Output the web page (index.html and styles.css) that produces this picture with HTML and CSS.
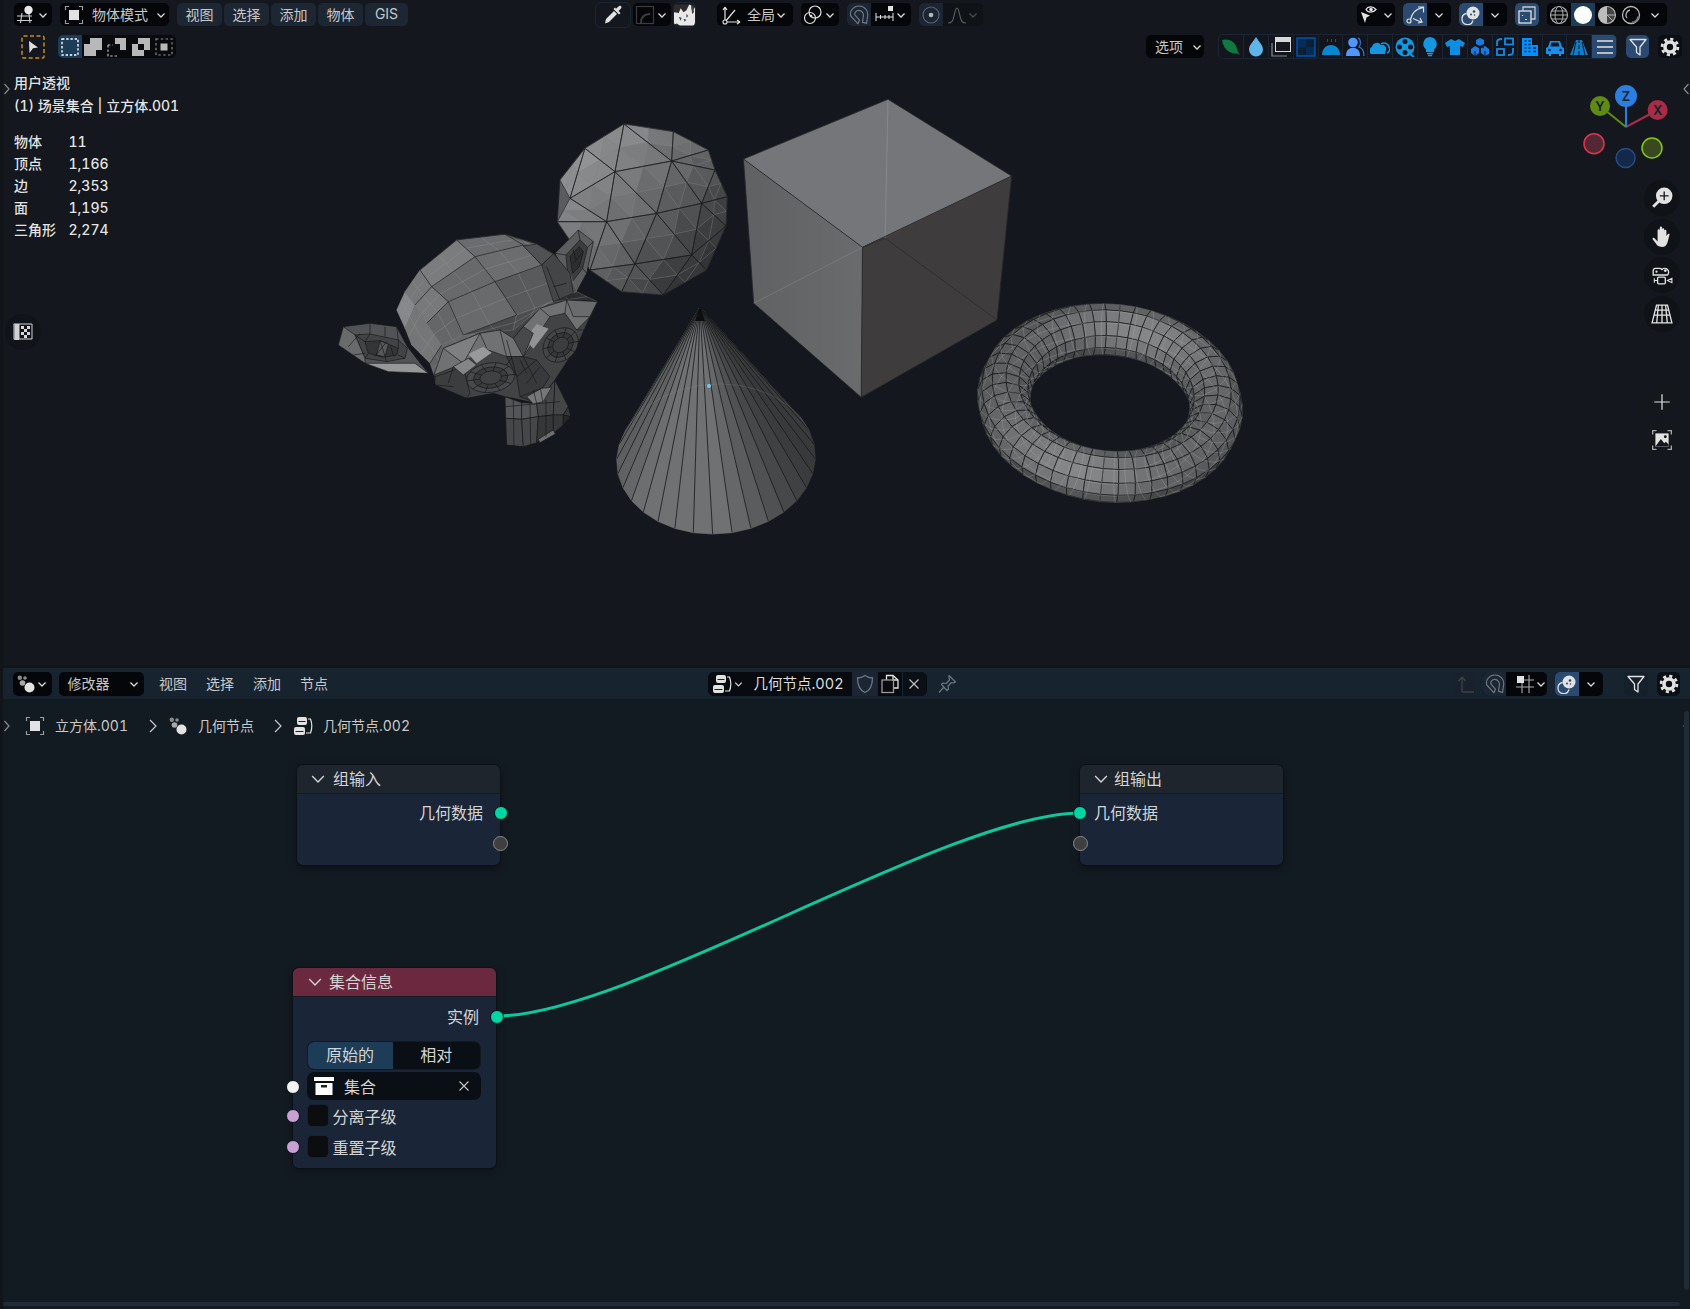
FILE: index.html
```html
<!DOCTYPE html>
<html lang="zh-CN">
<head>
<meta charset="utf-8">
<title>Blender</title>
<link rel="stylesheet" href="styles.css">
</head>
<body>
<svg class="defs" aria-hidden="true">
  <symbol id="chev" viewBox="0 0 12 12"><path d="M2.5 4.5 6 8l3.500-3.500" fill="none" stroke="currentColor" stroke-width="1.300"/></symbol>
  <symbol id="objmode" viewBox="0 0 20 20"><rect x="5" y="5" width="10" height="10" fill="currentColor"/><path d="M5 1.500H1.500V5M15 1.500h3.500V5M5 18.500H1.500V15M15 18.500h3.500V15" fill="none" stroke="#9a9a9a" stroke-width="1.200"/></symbol>
  <symbol id="overlay" viewBox="0 0 20 20"><path d="M5.500 8.500a5.600 5.600 0 1 0 6.500 7" fill="none" stroke="currentColor" stroke-width="1.300"/><circle cx="12" cy="8" r="6.500" fill="currentColor"/><circle cx="13" cy="6.500" r="1.300" fill="#2a4a72"/><circle cx="10" cy="9.500" r="1" fill="#2a4a72"/><circle cx="13.500" cy="10" r=".8" fill="#2a4a72"/></symbol>
  <symbol id="filter" viewBox="0 0 20 20"><path d="M2 2.500h16l-6 7.500v8L8.500 15.500V10z" fill="none" stroke="currentColor" stroke-width="1.300" stroke-linejoin="round"/></symbol>
  <symbol id="gear" viewBox="0 0 20 20"><circle cx="10" cy="10" r="5" fill="none" stroke="currentColor" stroke-width="3.600"/><circle cx="10" cy="10" r="7.900" fill="none" stroke="currentColor" stroke-width="2.800" stroke-dasharray="3.100 3.100"/></symbol>
  <symbol id="magnet" viewBox="0 0 20 20"><path d="M9 18.800 1.800 11C.2 6 4.500 1 10 1c5.500 0 9.200 4.500 8.700 9.500l-1.200 7.800-4-1 .9-6.300c.4-3-1.800-5.700-4.600-5.700-3 0-4.800 3-3.600 5l4.300 4.800z" fill="none" stroke="currentColor" stroke-width="1.200" stroke-linejoin="round"/></symbol>
  <symbol id="nodes" viewBox="0 0 20 20"><circle cx="13.500" cy="13.500" r="5" fill="currentColor"/><circle cx="6.500" cy="9" r="2.800" fill="#a8a8a8"/><circle cx="3.800" cy="3.800" r="2.200" fill="#8a8a8a"/><circle cx="9" cy="4" r="1.800" fill="#8a8a8a"/></symbol>
  <symbol id="nodetree" viewBox="0 0 20 20"><rect x="4" y="1" width="10" height="8" rx="2" fill="currentColor"/><rect x="1" y="11" width="11" height="8" rx="2" fill="currentColor"/><path d="M5.500 5.500h7M2.500 15.500h8" stroke="#222" stroke-width="1.200"/><path d="M15 3h2.500c1.500 4 1.500 10 0 14H13" fill="none" stroke="currentColor" stroke-width="1.200"/></symbol>
  <symbol id="xmark" viewBox="0 0 12 12"><path d="M1.500 1.500l9 9m0-9-9 9" fill="none" stroke="currentColor" stroke-width="1.200"/></symbol>
</svg>

<div class="app">
  <section class="viewport">
    <svg class="scene" viewBox="3 0 1687 665">
      <g id="scene3d"></g>
      <g class="gizmo">
        <circle cx="1594" cy="143.700" r="10" fill="#532835" stroke="#dc3550" stroke-width="1.500"/>
        <circle cx="1652" cy="148" r="10" fill="#39481f" stroke="#82c80f" stroke-width="1.500"/>
        <circle cx="1625.600" cy="158" r="9.500" fill="#14294a" stroke="#234d80" stroke-width="1.500"/>
        <path d="M1626 127l-26-21" stroke="#5f8b13" stroke-width="2"/>
        <path d="M1626 127l31.600-17" stroke="#a82c45" stroke-width="2"/>
        <path d="M1626 127V96" stroke="#2a7fe0" stroke-width="2"/>
        <circle cx="1600" cy="106" r="10" fill="#5f8b13"/><text x="1600" y="110.500" class="axis">Y</text>
        <circle cx="1657.600" cy="110" r="10" fill="#a82c45"/><text x="1657.600" y="114.500" class="axis">X</text>
        <circle cx="1626" cy="96" r="11" fill="#2a7fe0"/><text x="1626" y="100.500" class="axis">Z</text>
      </g>
    </svg>
    <svg class="edge-arrow edge-left" viewBox="0 0 8 14"><path d="M1.500 2 6 7l-4.500 5" fill="none" stroke="#8a8a8a" stroke-width="1.200"/></svg>
    <svg class="edge-arrow edge-right" viewBox="0 0 8 14"><path d="M6.500 2 2 7l4.500 5" fill="none" stroke="#8a8a8a" stroke-width="1.200"/></svg>

    <div class="vp-ui">
      <header class="row row-top">
        <div class="cluster">
          <div class="grp w38">
            <svg class="ic" viewBox="0 0 20 20"><path d="M1 11h15M1 15.500h15M6 8l-1.500 10M13 9l1 9" fill="none" stroke="#cfcfcf" stroke-width="1.100"/><circle cx="12.500" cy="5" r="4.200" fill="#e8e8e8"/></svg>
            <svg class="chev"><use href="#chev"/></svg>
          </div>
          <div class="grp w109 mode">
            <svg class="ic lit"><use href="#objmode"/></svg>
            <span class="lbl">物体模式</span>
            <svg class="chev push"><use href="#chev"/></svg>
          </div>
          <nav class="menu">
            <button class="mbtn">视图</button>
            <button class="mbtn">选择</button>
            <button class="mbtn">添加</button>
            <button class="mbtn">物体</button>
            <button class="mbtn">GIS</button>
          </nav>
        </div>

        <div class="cluster center-top">
          <div class="tight">
            <div class="ghost w36">
              <svg class="ic lit" viewBox="0 0 20 20"><path d="M2 18.500 3 14l8-8 3 3-8 8z" fill="currentColor"/><path d="M10.500 4l5.500 5.500 1.500-1.500-2-2L18 3.500C19.500 1.500 17 -.5 15.500 1.500L13 3.800 12 2.500z" fill="currentColor"/></svg>
            </div>
            <div class="grp w38">
              <svg class="ic" viewBox="0 0 20 20"><rect x="1.500" y="1.500" width="17" height="17" fill="none" stroke="#3c3c3c" stroke-width="1.200"/><path d="M6 18c0-6 3-9 9-9" fill="none" stroke="#3c3c3c" stroke-width="2"/></svg>
              <svg class="chev"><use href="#chev"/></svg>
            </div>
            <div class="ghost w23 thumb">
              <svg viewBox="0 0 22 22"><rect width="22" height="22" fill="#2c2c2c"/><path d="M0 8l5 1L7 4l3 4 3-2 3-6 2 1 1 6 3-4v19H6l-3-2-3 1z" fill="#e8e8e8"/><path d="M5 13l3 1-1 3zm8-3l2 2-2 2zm-3 5l3 1-2 2zM18 2l1 8 2-2-1-6z" fill="#444"/></svg>
            </div>
          </div>
          <div class="grp w76">
            <svg class="ic lit" viewBox="0 0 20 20"><path d="M4 17V2M4 2 2 5m2-3 2 3M4 17h15m0 0-3-2m3 2-3 2M4 17 14 5" fill="none" stroke="currentColor" stroke-width="1.200"/><circle cx="4" cy="17" r="2" fill="#050608" stroke="currentColor" stroke-width="1.100"/></svg>
            <span class="lbl sm">全局</span>
            <svg class="chev"><use href="#chev"/></svg>
          </div>
          <div class="grp w38">
            <svg class="ic lit" viewBox="0 0 20 20"><circle cx="12" cy="7" r="6" fill="none" stroke="currentColor" stroke-width="1.200"/><circle cx="7" cy="13" r="5.500" fill="none" stroke="currentColor" stroke-width="1.200"/><circle cx="8" cy="11" r="1.300" fill="currentColor"/></svg>
            <svg class="chev"><use href="#chev"/></svg>
          </div>
          <div class="grp w64 split">
            <div class="cell navy w24"><svg class="ic dim"><use href="#magnet"/></svg></div>
            <svg class="ic lit" viewBox="0 0 20 20"><rect x="13" y="1" width="5" height="5" fill="currentColor"/><path d="M1 8v8M18 8v8M1 12h17M5.500 10v4M10 10v4M14 10v4" fill="none" stroke="currentColor" stroke-width="1"/></svg>
            <svg class="chev"><use href="#chev"/></svg>
          </div>
          <div class="grp w64 split faded">
            <div class="cell navy w24"><svg class="ic" viewBox="0 0 20 20"><circle cx="10" cy="10" r="8" fill="none" stroke="#5a6270" stroke-width="1.200"/><circle cx="10" cy="10" r="2.300" fill="#b8b8b8"/></svg></div>
            <svg class="ic" viewBox="0 0 20 20"><path d="M1 18c4 0 5-2 6-7s2-8 3-8 2 3 3 8 2 7 6 7" fill="none" stroke="#5c5c5c" stroke-width="1.200"/></svg>
            <svg class="chev dimchev"><use href="#chev"/></svg>
          </div>
        </div>

        <div class="cluster right-top">
          <div class="grp w38 eye">
            <svg class="ic lit" viewBox="0 0 20 20"><path d="M7 4.500C9 1 14 1 17 4.500 14 8 9 8 7 4.500z" fill="none" stroke="currentColor" stroke-width="1.200"/><circle cx="12" cy="4.500" r="1.800" fill="currentColor"/><path d="M2 7l9 3.500-3.500 2L6 18z" fill="currentColor"/></svg>
            <svg class="chev"><use href="#chev"/></svg>
          </div>
          <div class="grp w48 split">
            <div class="cell blue w24"><svg class="ic lit" viewBox="0 0 20 20"><path d="M5.500 14.500C7 8 10 4.500 18 2.500M13 2h5.500v5.500M8 13.500l8 3.500M15 13l2 4-4 1" fill="none" stroke="currentColor" stroke-width="1.200"/><circle cx="4" cy="16" r="2" fill="none" stroke="currentColor" stroke-width="1.200"/></svg></div>
            <svg class="chev wide"><use href="#chev"/></svg>
          </div>
          <div class="grp w48 split">
            <div class="cell blue w24"><svg class="ic lit"><use href="#overlay"/></svg></div>
            <svg class="chev wide"><use href="#chev"/></svg>
          </div>
          <div class="cell blue w24 rounded">
            <svg class="ic lit" viewBox="0 0 20 20"><rect x="2" y="6" width="12" height="12" fill="none" stroke="currentColor" stroke-width="1.300"/><path d="M6 6V2h12v12h-4" fill="none" stroke="#c8c8c8" stroke-width="1.300"/><path d="M5.500 10v1M8 14.500h2" stroke="currentColor" stroke-width="1.200"/></svg>
          </div>
          <div class="grp w120 shading">
            <div class="cell w24"><svg class="ic" viewBox="0 0 20 20"><circle cx="10" cy="10" r="8.500" fill="none" stroke="#aaa" stroke-width="1.200"/><ellipse cx="10" cy="10" rx="4" ry="8.500" fill="none" stroke="#aaa"/><path d="M1.500 10h17M3 6h14M3 14h14" stroke="#aaa"/></svg></div>
            <div class="cell navy2 w24"><svg class="ic" viewBox="0 0 20 20"><circle cx="10" cy="10" r="9" fill="#fff"/></svg></div>
            <div class="cell w24"><svg class="ic" viewBox="0 0 20 20"><circle cx="10" cy="10" r="8.500" fill="#444" stroke="#b4b4b4" stroke-width="1.200"/><path d="M10 1.500A8.500 8.500 0 0 0 10 18.500V10z" fill="#bdbdbd"/><path d="M10 10h8M10 10l6 6" stroke="#b4b4b4"/></svg></div>
            <div class="cell w24"><svg class="ic" viewBox="0 0 20 20"><circle cx="10" cy="10" r="8.500" fill="none" stroke="#b4b4b4" stroke-width="1.300"/><path d="M6 13a5 5 0 0 1 3-8" fill="none" stroke="#b4b4b4" stroke-width="1.300"/><path d="M11 17.500c3 0 6-3 6.500-6" fill="none" stroke="#777" stroke-width="2"/></svg></div>
            <svg class="chev wide"><use href="#chev"/></svg>
          </div>
        </div>
      </header>

      <div class="row row-tool">
        <div class="cluster">
          <div class="tool">
            <svg viewBox="0 0 24 24"><rect x="1" y="1" width="22" height="22" rx="1.500" fill="none" stroke="#c98a1e" stroke-width="1.500" stroke-dasharray="4 2.500"/><path d="M8 6l9 6.500-5 .7-3.500 4.800z" fill="#e0e0e0"/></svg>
          </div>
          <div class="modes">
            <div class="cell sel w24"><svg class="ic" viewBox="0 0 20 20"><rect x="2" y="2" width="16" height="16" fill="none" stroke="#fff" stroke-width="1.400" stroke-dasharray="2.400 1.800"/></svg></div>
            <div class="cell w24"><svg class="ic" viewBox="0 0 20 20"><path d="M7 1h12v12h-6v6H1V7h6z" fill="#b8b8b8"/></svg></div>
            <div class="cell w24"><svg class="ic" viewBox="0 0 20 20"><path d="M8 1h11v12h-6V7H8z" fill="#b8b8b8"/><path d="M1 8v11h11M1 8h5" fill="none" stroke="#b8b8b8" stroke-width="1.200" stroke-dasharray="2.400 2"/></svg></div>
            <div class="cell w24"><svg class="ic" viewBox="0 0 20 20"><path d="M7 1h12v12h-6V7H7z" fill="#b8b8b8"/><path d="M1 7h6v6h6v6H1z" fill="#b8b8b8"/></svg></div>
            <div class="cell w24"><svg class="ic" viewBox="0 0 20 20"><rect x="6.500" y="6.500" width="7" height="7" fill="#b8b8b8"/><rect x="2" y="2" width="16" height="16" fill="none" stroke="#8c8c8c" stroke-width="1.200" stroke-dasharray="2.400 2.400"/></svg></div>
          </div>
        </div>
        <div class="cluster right-tool">
          <div class="grp w58 options"><span class="lbl sm">选项</span><svg class="chev push"><use href="#chev"/></svg></div>
          <div class="collections">
            <div class="ccell"><svg viewBox="0 0 20 20"><path d="M1 3c7-2 14 1 16 12l2 3-3-1.500C8 17 2 11 1 3z" fill="#0e7a42"/></svg></div>
            <div class="ccell"><svg viewBox="0 0 20 20"><path d="M10 0c3 5 7 8 7 12.500a7 7 0 0 1-14 0C3 8 7 5 10 0z" fill="#5fb4ea"/></svg></div>
            <div class="ccell"><svg viewBox="0 0 20 20"><rect x="4" y="0" width="16" height="15" fill="#d8d8d8"/><rect x="5" y="5" width="14" height="9" fill="#14181e"/><path d="M1 6v13h15" fill="none" stroke="#8a8a8a" stroke-width="1.200"/></svg></div>
            <div class="ccell"><svg viewBox="0 0 20 20"><rect x="1" y="1" width="18" height="18" fill="#052c58" stroke="#0050a8" stroke-width="1.500"/><rect x="10" y="2" width="8" height="8" fill="#0d1f33"/><rect x="2" y="10" width="8" height="8" fill="#0d1f33"/></svg></div>
            <div class="ccell"><svg viewBox="0 0 20 20"><path d="M1 18c0-6 4-10 9-10s9 4 9 10z" fill="#0a86d0"/><path d="M6 2c2 1-1 2 1 3M10 2c2 1-1 2 1 3M14 2c2 1-1 2 1 3" fill="none" stroke="#0a6aa8"/></svg></div>
            <div class="ccell"><svg viewBox="0 0 20 20"><circle cx="8" cy="5.500" r="4.800" fill="#4f96ff"/><path d="M1 19c0-5 2-7 5-8h4c3 1 5 3 5 8z" fill="#4f96ff"/><path d="M13 1c3 1 3 7 1 9 3 1 5 4 5 9" fill="none" stroke="#3978cc" stroke-width="1.200"/></svg></div>
            <div class="ccell"><svg viewBox="0 0 20 20"><path d="M1 17a4 4 0 0 1 1-7 5 5 0 0 1 9-2 4 4 0 0 1 5 5l-1 4z" fill="#1596e0"/><path d="M11 7a5 5 0 0 1 8 3 4 4 0 0 1-2 6" fill="none" stroke="#1596e0" stroke-width="1.500"/></svg></div>
            <div class="ccell"><svg viewBox="0 0 20 20"><circle cx="10" cy="10" r="9.500" fill="#1596e0"/><circle cx="10" cy="4.500" r="2.500" fill="#14181e"/><circle cx="10" cy="15.500" r="2.500" fill="#14181e"/><circle cx="4.500" cy="10" r="2.500" fill="#14181e"/><circle cx="15.500" cy="10" r="2.500" fill="#14181e"/><path d="M15 17l4 3" stroke="#1596e0" stroke-width="2"/></svg></div>
            <div class="ccell"><svg viewBox="0 0 20 20"><path d="M10 0a7 7 0 0 1 4 12.500V15H6v-2.500A7 7 0 0 1 10 0z" fill="#1596e0"/><path d="M7 16.500h6M8 18.500h4" stroke="#1596e0" stroke-width="1.300"/></svg></div>
            <div class="ccell"><svg viewBox="0 0 20 20"><path d="M6 2l4 2 4-2 6 4-2 4-3-1v9H5V9l-3 1-2-4z" fill="#0d8ee0"/></svg></div>
            <div class="ccell"><svg viewBox="0 0 20 20"><path d="M10 1l4 2v4l-4 2-4-2V3zM5 9l4 2v5l-4 3-4-3v-4zM15 9l4 3v5l-4 2-4-3v-5z" fill="#1a7ae0"/><path d="M10 9l4 2M5 14v5M15 14v5" stroke="#14181e"/></svg></div>
            <div class="ccell"><svg viewBox="0 0 20 20"><rect x="10" y="1.500" width="8" height="6" fill="none" stroke="#1a88e0" stroke-width="1.800"/><rect x="2" y="12" width="7" height="6" fill="none" stroke="#1a88e0" stroke-width="1.800"/><path d="M2 9V5c0-2 1-3 5-3M18 11v4c0 2-1 3-5 3" fill="none" stroke="#1a88e0" stroke-width="1.800"/></svg></div>
            <div class="ccell"><svg viewBox="0 0 20 20"><path d="M2 19V1h10v7h6v11z" fill="#0090ff"/><path d="M4.500 4h2M8.500 4h2M4.500 7.500h2M8.500 7.500h2M4.500 11h2M8.500 11h2M13 11h3M13 14.500h3M4.500 14.500h2M8.500 14.500h2" stroke="#14181e" stroke-width="1.500"/></svg></div>
            <div class="ccell"><svg viewBox="0 0 20 20"><path d="M1 17v-6l2-1 2-6h10l2 6 2 1v6h-3v2h-2v-2H6v2H4v-2z" fill="#1590f0"/><path d="M5.500 9.500l1-4h7l1 4z" fill="#14181e"/><circle cx="4.500" cy="13" r="1.300" fill="#14181e"/><circle cx="15.500" cy="13" r="1.300" fill="#14181e"/></svg></div>
            <div class="ccell"><svg viewBox="0 0 20 20"><path d="M1 18 7 3h6l6 15z" fill="#0f7dc8"/><path d="M10 3v3M10 8v4M10 14v4M7 5 4 18M13 5l3 13" stroke="#14181e" stroke-width="1"/></svg></div>
            <div class="ccell active"><svg viewBox="0 0 20 20"><path d="M2 4h16M2 10h16M2 16h16" stroke="#b4bcc6" stroke-width="1.800"/></svg></div>
          </div>
          <div class="cell blue w23 rounded"><svg class="ic lit"><use href="#filter"/></svg></div>
          <div class="cell blackish w24 rounded"><svg class="ic lit"><use href="#gear"/></svg></div>
        </div>
      </div>

      <div class="hud">
        <div class="hud-line">用户透视</div>
        <div class="hud-line">(1) 场景集合 | 立方体.001</div>
        <dl class="stats">
          <dt>物体</dt><dd>11</dd>
          <dt>顶点</dt><dd>1,166</dd>
          <dt>边</dt><dd>2,353</dd>
          <dt>面</dt><dd>1,195</dd>
          <dt>三角形</dt><dd>2,274</dd>
        </dl>
        <div class="roundbtn hud-btn">
          <svg class="ic lit" viewBox="0 0 20 20"><path d="M1.500 2H6v16H1.500z" fill="#d0d0d0"/><path d="M1 2h18v15H1zM6 2v15" fill="none" stroke="#d0d0d0"/><path d="M8 4h3v3H8zm6 0h3v3h-3zm-3 3h3v3h-3zM8 10h3v3H8zm6 0h3v3h-3zm-3 3h3v3h-3z" fill="#d8d8d8"/></svg>
        </div>
      </div>
    </div>

    <aside class="navcol">
      <div class="roundbtn"><svg class="ic lit" viewBox="0 0 20 20"><circle cx="12" cy="8" r="7.500" fill="currentColor"/><path d="M12 4v8M8 8h8" stroke="#14181e" stroke-width="1.200"/><path d="M7 13l-5 5" stroke="currentColor" stroke-width="2.600"/></svg></div>
      <div class="roundbtn"><svg class="ic lit" viewBox="0 0 20 20"><path d="M3 11l3 3V4a1 1 0 0 1 2 0V1.500a1 1 0 0 1 2 0V3a1 1 0 0 1 2 0v1.500a1 1 0 0 1 2 0V9c1-1.500 1.500-2 2.500-2 .5 0 .5.500.3 1L15 15c-1 3-2.500 4-5 4-3 0-4.500-1-5.500-3l-3-4c-.5-1 .5-2 1.500-1z" fill="currentColor"/></svg></div>
      <div class="roundbtn"><svg class="ic lit" viewBox="0 0 20 20"><path d="M2 10V6a2 2 0 0 1 2-2h3a3 3 0 0 1 3 1 3.500 3.500 0 1 1 5 5z" fill="none" stroke="currentColor" stroke-width="1.200"/><circle cx="5" cy="7" r="1" fill="currentColor"/><circle cx="13" cy="6" r="1.300" fill="currentColor"/><rect x="6" y="12" width="7" height="6" rx="1" fill="none" stroke="currentColor" stroke-width="1.200"/><path d="M3 13v4M3 15h3M15 15l4-2v4z" fill="none" stroke="currentColor"/></svg></div>
      <div class="roundbtn"><svg class="ic lit" viewBox="0 0 20 20"><path d="M5 2h10l4 16H1zM10 2v16M2.700 11h14.600M4 6.500h12M6.700 2l-1.500 16M13.300 2l1.500 16" fill="none" stroke="currentColor" stroke-width="1.200"/></svg></div>
      <div class="roundbtn gapped faint"><svg class="ic lit" viewBox="0 0 20 20"><path d="M10 3v14M3 10h14" stroke="currentColor" stroke-width="1.100"/></svg></div>
      <div class="roundbtn faint"><svg class="ic lit" viewBox="0 0 20 20"><path d="M5 1.500H1.500V5M15 1.500h3.500V5M5 18.500H1.500V15M15 18.500h3.500V15" fill="none" stroke="#a8a8a8" stroke-width="1.200"/><rect x="4" y="4" width="12" height="12" fill="currentColor"/><path d="M4 16l5-7 3 4 1.500-1.500L16 14v2z" fill="#14181e"/><circle cx="13" cy="7" r="1.300" fill="#14181e"/></svg></div>
    </aside>
  </section>

  <section class="editor">
    <header class="ed-head">
      <div class="grp h24 w39">
        <svg class="ic lit"><use href="#nodes"/></svg>
        <svg class="chev"><use href="#chev"/></svg>
      </div>
      <div class="grp h24 w85 ed-mode"><span class="lbl sm">修改器</span><svg class="chev push"><use href="#chev"/></svg></div>
      <nav class="ed-menu">
        <span class="emi">视图</span><span class="emi">选择</span><span class="emi">添加</span><span class="emi">节点</span>
      </nav>
      <div class="tree">
        <div class="cell black w38"><svg class="ic lit"><use href="#nodetree"/></svg><svg class="chev"><use href="#chev"/></svg></div>
        <div class="cell black w106"><span class="lbl tree-name">几何节点.002</span></div>
        <div class="cell navy w26"><svg class="ic dim" viewBox="0 0 20 20"><path d="M10 1.500c2 1.500 5 2.500 7.500 2.500 0 7-2 12-7.500 14.500C4.500 16 2.500 11 2.500 4 5 4 8 3 10 1.500z" fill="none" stroke="currentColor" stroke-width="1.300"/></svg></div>
        <div class="cell black w24"><svg class="ic lit" viewBox="0 0 20 20"><path d="M6.500 6V1.500H13l5 4.500v8h-4.500" fill="none" stroke="currentColor" stroke-width="1.300"/><path d="M13 1.500V6h5" fill="none" stroke="currentColor" stroke-width="1.300"/><rect x="2" y="6" width="11.500" height="12.500" fill="none" stroke="#9a9a9a" stroke-width="1.300"/></svg></div>
        <div class="cell sep w24"><svg class="x"><use href="#xmark"/></svg></div>
      </div>
      <svg class="ic dim pin" viewBox="0 0 20 20"><path d="M12 1.500l6.500 6.500-2 1-2-.5-3.500 3.500.5 3-1.500 1.500L4.500 10.500 6 9l3 .5L12.500 6l-.5-2zM7 13l-5 5.500" fill="none" stroke="currentColor" stroke-width="1.200" stroke-linejoin="round"/></svg>
      <div class="ed-right">
        <div class="cell faintbtn w23"><svg class="ic" viewBox="0 0 20 20"><path d="M7 18V3M7 3 3.500 7M7 3l3.500 4M7 18h12" fill="none" stroke="#3c4248" stroke-width="1.300"/></svg></div>
        <div class="grp h24 w62 split magnetgrp">
          <div class="cell navy w23"><svg class="ic dim"><use href="#magnet"/></svg></div>
          <svg class="ic lit" viewBox="0 0 20 20"><rect x="2" y="2" width="7" height="7" fill="currentColor"/><path d="M1 13h18M9 6h10M14 1v18M7 9v10" fill="none" stroke="#aaa" stroke-width="1.100"/></svg>
          <svg class="chev"><use href="#chev"/></svg>
        </div>
        <div class="grp h24 w48 split ovgrp">
          <div class="cell blue w24"><svg class="ic lit"><use href="#overlay"/></svg></div>
          <svg class="chev wide"><use href="#chev"/></svg>
        </div>
        <div class="cell faintbtn w24 filtbtn"><svg class="ic lit"><use href="#filter"/></svg></div>
        <div class="cell blackish w23"><svg class="ic lit"><use href="#gear"/></svg></div>
      </div>
    </header>

    <div class="crumbs">
      <svg class="crumb-tab" viewBox="0 0 8 14"><path d="M1.500 2 6 7l-4.500 5" fill="none" stroke="#8a8a8a" stroke-width="1.200"/></svg>
      <svg class="ic lit"><use href="#objmode"/></svg><span class="crumb c1">立方体.001</span>
      <svg class="crumb-sep" viewBox="0 0 8 14"><path d="M1 1l6 6-6 6" fill="none" stroke="#c8c8c8" stroke-width="1.200"/></svg>
      <svg class="ic lit"><use href="#nodes"/></svg><span class="crumb c2">几何节点</span>
      <svg class="crumb-sep" viewBox="0 0 8 14"><path d="M1 1l6 6-6 6" fill="none" stroke="#c8c8c8" stroke-width="1.200"/></svg>
      <svg class="ic lit"><use href="#nodetree"/></svg><span class="crumb c3">几何节点.002</span>
    </div>

    <svg class="edge-arrow edge-right ed-tab" viewBox="0 0 8 14"><path d="M6.500 2 2 7l4.500 5" fill="none" stroke="#8a8a8a" stroke-width="1.200"/></svg>

    <svg class="wires" viewBox="3 668 1687 641">
      <path d="M497 1016C627 1016 950 813 1080 813" fill="none" stroke="#10c79b" stroke-width="3"/>
    </svg>

    <article class="node node-input">
      <div class="node-head"><svg class="ncaret" viewBox="0 0 12 12"><path d="M1 3.500 6 8.500l5-5" fill="none" stroke="currentColor" stroke-width="1.200"/></svg><span class="node-title">组输入</span></div>
      <div class="node-body">
        <div class="nrow right">几何数据<i class="sock out geo"></i></div>
        <div class="nrow right"><i class="sock out virt"></i></div>
      </div>
    </article>

    <article class="node node-output">
      <div class="node-head"><svg class="ncaret" viewBox="0 0 12 12"><path d="M1 3.500 6 8.500l5-5" fill="none" stroke="currentColor" stroke-width="1.200"/></svg><span class="node-title">组输出</span></div>
      <div class="node-body">
        <div class="nrow left">几何数据<i class="sock in geo"></i></div>
        <div class="nrow left"><i class="sock in virt"></i></div>
      </div>
    </article>

    <article class="node node-info">
      <div class="node-head red"><svg class="ncaret" viewBox="0 0 12 12"><path d="M1 3.500 6 8.500l5-5" fill="none" stroke="currentColor" stroke-width="1.200"/></svg><span class="node-title">集合信息</span></div>
      <div class="node-body">
        <div class="nrow right">实例<i class="sock out geo"></i></div>
        <div class="toggle"><span class="tog on">原始的</span><span class="tog">相对</span></div>
        <div class="field">
          <i class="sock in white"></i>
          <svg class="box-ic" viewBox="0 0 20 18"><path d="M0 0h20v4H0z" fill="#fff"/><path d="M1.500 6h17v12h-17z" fill="#fff"/><path d="M7 8h6v2.500H7z" fill="#222"/></svg>
          <span class="field-txt">集合</span>
          <svg class="x"><use href="#xmark"/></svg>
        </div>
        <div class="crow"><i class="sock in pink"></i><span class="check"></span><span>分离子级</span></div>
        <div class="crow"><i class="sock in pink"></i><span class="check"></span><span>重置子级</span></div>
      </div>
    </article>

    <div class="scroll-v"></div>
    <div class="scroll-h"></div>
  </section>
</div>
<script src="scene.js"></script>
</body>
</html>
```

FILE: styles.css
```css
* { box-sizing: border-box; }
html, body { margin: 0; padding: 0; background: #111418; }
body { font-family: "Inter", "Noto Sans CJK SC", sans-serif; font-size: 14px; color: #c9c9c9; overflow: hidden; font-variant-numeric: tabular-nums; }
.defs { position: absolute; width: 0; height: 0; }

.app { width: 1690px; height: 1309px; display: flex; flex-direction: column; padding-left: 3px; background: #111418; }

/* ---------- viewport ---------- */
.viewport { position: relative; height: 665px; background: #14181e; flex: none; }
.scene { position: absolute; left: 0; top: 0; width: 1687px; height: 665px; }
.axis { font: 600 13px "Inter", sans-serif; fill: #12202e; text-anchor: middle; }
.vp-ui { position: relative; padding-top: 3px; }

.edge-arrow { position: absolute; width: 8px; height: 14px; top: 82px; }
.edge-left { left: 0; }
.edge-right { right: 0; }

.row { display: flex; align-items: center; height: 23px; }
.row-top { padding: 0 23px 0 11px; }
.row-tool { margin-top: 9px; padding: 0 8px 0 18px; }
.cluster { display: flex; align-items: center; }
.center-top { margin-left: 187px; }
.right-top { margin-left: auto; gap: 8px; }
.right-tool { margin-left: auto; }

.grp { display: flex; align-items: center; height: 23px; background: #040609; border-radius: 5px; overflow: hidden; flex: none; }
.h24 { height: 24px; }
.w38 { width: 38px; padding-left: 2px; }
.w38 .chev { margin-left: 1px; }
.eye .chev { margin-left: 3px; }
.w39 { width: 39px; padding-left: 3px; }
.w48 { width: 48px; }
.w58 { width: 58px; }
.w62 { width: 62px; }
.w64 { width: 64px; }
.w76 { width: 76px; padding-left: 4px; }
.w85 { width: 85px; }
.w109 { width: 109px; padding: 0 2px 0 4px; }
.w120 { width: 120px; }

.cell { display: flex; align-items: center; justify-content: center; height: 100%; flex: none; }
.w23 { width: 23px; }
.w24 { width: 24px; }
.w26 { width: 26px; }
.w36 { width: 36px; }
.w106 { width: 106px; }
.rounded { height: 23px; border-radius: 5px; }
.navy { background: #1c2533; }
.navy2 { background: #1d3c58; }
.blue { background: #2a4a72; }
.black { background: #070a0e; }
.blackish { background: #0b0e12; }
.sep { background: #0b1016; border-left: 1px solid #1a2430; color: #c8c8c8; }
.sel { background: #1d3c58; }

.ic { width: 20px; height: 20px; flex: none; display: block; }
.lit { color: #e2e2e2; }
.dim { color: #6f7780; }
.chev { width: 12px; height: 12px; flex: none; color: #d8d8d8; display: block; }
.chev.wide { margin-left: 6px; }
.chev.push { margin-left: auto; }
.dimchev { color: #4c4c4c; }
.lbl { margin-left: 8px; padding-bottom: 2px; color: #c8c8c8; white-space: nowrap; }
.lbl.sm { margin-left: 6px; }

.menu { display: flex; gap: 2px; margin-left: 8px; }
.cluster > .grp + .grp { margin-left: 8px; }
.right-top > .grp + .grp { margin-left: 0; }
.mbtn { width: 45px; height: 23px; padding: 0 0 2px; border: 0; border-radius: 5px; background: #1c2733; color: #c8c8c8; font: inherit; }
.mbtn:last-child { width: 43px; }

.tight { display: flex; align-items: center; gap: 2px; }
.ghost { height: 26px; display: flex; align-items: center; justify-content: center; border: 1px solid #1b2533; border-radius: 6px; flex: none; overflow: hidden; }
.thumb svg { width: 100%; height: 100%; display: block; }
.center-top .tight + .grp { margin-left: 21px; }
.split .cell { height: 100%; margin-right: 0; }
.split > .ic { margin-left: 4px; }
.faded { background: #0f1216; }

.tool { width: 24px; height: 24px; flex: none; }
.tool svg { display: block; width: 24px; height: 24px; }
.modes { display: flex; width: 118px; height: 23px; margin-left: 13px; background: #080a0d; border-radius: 5px; overflow: hidden; }
.modes .cell { width: 23.600px; }

.options { padding: 0 1px 0 1px; }
.options .lbl.sm { margin-left: 8px; }
.collections { display: flex; width: 399px; height: 25px; margin-left: 14px; margin-right: 9px; background: #12161c; border: 1px solid #1b2433; border-radius: 5px; overflow: hidden; }
.ccell { width: 24.900px; flex: none; display: flex; align-items: center; justify-content: center; border-right: 1px solid #1b2433; }
.ccell:last-child { border-right: 0; }
.ccell svg { width: 20px; height: 20px; display: block; }
.ccell.active { background: #2a4a72; }
.right-tool > .blue { margin-right: 9px; }

.hud { padding: 14px 0 0 11px; color: #e4e4e4; text-shadow: 0 0 1px #000; }
.hud-line { height: 23px; line-height: 22px; font-weight: 500; white-space: pre; }
.stats { display: grid; grid-template-columns: 54.500px auto; justify-content: start; grid-auto-rows: 22px; line-height: 22px; margin: 13px 0 0; font-weight: 500; }
.stats dt, .stats dd { margin: 0; }
.roundbtn { width: 36px; height: 36px; border-radius: 50%; background: #0f1317; display: flex; align-items: center; justify-content: center; }
.roundbtn.faint { background: #14171b; }
.hud-btn { margin: 73px 0 0 -9px; background: #10141a; }

.navcol { position: absolute; right: 10px; top: 180px; display: flex; flex-direction: column; gap: 2.700px; }
.navcol .ic { width: 22px; height: 22px; }
.gapped { margin-top: 49px; }

/* ---------- node editor ---------- */
.editor { position: relative; margin-top: 3px; flex: 1; background: #131b22; }
.ed-head { display: flex; align-items: center; height: 31px; background: #172430; padding: 0 10px 0 9.500px; }
.ed-mode { margin-left: 7px; padding: 0 4px 0 9px; }
.ed-mode .lbl.sm { margin-left: 0; }
.ed-menu { display: flex; margin-left: 6px; }
.emi { width: 47px; text-align: center; padding-bottom: 2px; }
.tree { display: flex; align-items: stretch; height: 24px; width: 219px; margin-left: 370px; background: #070a0e; border-radius: 6px; overflow: hidden; flex: none; }
.tree .w38 { padding-left: 3px; }
.tree .chev { width: 11px; }
.tree-name { font-size: 14.500px; color: #dcdcdc; margin: 0; }
.pin { margin-left: 10px; }
.ed-right { display: flex; align-items: center; margin-left: auto; height: 24px; }
.ed-right > * { height: 24px; }
.faintbtn { background: #19222c; border-radius: 5px; }
.magnetgrp { margin-left: 7px; width: 64px; }
.magnetgrp .cell { width: 23px; }
.magnetgrp > .ic { margin-left: 9px; }
.ovgrp { margin-left: 8px; }
.filtbtn { margin-left: 21px; background: #16202a; }
.ed-right .blackish { margin-left: 9px; border-radius: 5px; }

.crumbs { display: flex; align-items: center; height: 22px; margin-top: 16px; padding-left: 22px; position: relative; }
.crumb { margin-left: 10px; padding-bottom: 2px; white-space: nowrap; }
.crumb-tab { position: absolute; left: 0; top: 4px; width: 8px; height: 14px; }
.crumb-sep { width: 8px; height: 14px; flex: none; }
.c1 { width: 72px; }
.crumbs .c1 + .crumb-sep { margin-left: 22px; margin-right: 11px; }
.c2 { width: 55px; }
.crumbs .c2 + .crumb-sep { margin-left: 21px; margin-right: 11px; }

.ed-tab { top: 51px; }
.wires { position: absolute; left: 0; top: 0; width: 1687px; height: 641px; }

.node { position: absolute; width: 203px; border-radius: 6px; background: #1a2637; box-shadow: 0 0 0 1px #0c1118, 0 3px 10px rgba(0,0,0,.45); color: #d4d4d4; font-size: 16px; }
.node-input { left: 294px; top: 97px; height: 100px; }
.node-output { left: 1077px; top: 97px; height: 100px; }
.node-info { left: 290px; top: 300px; height: 200px; }
.node-head { display: flex; align-items: center; height: 29px; padding-left: 14px; background: #1f252d; border-radius: 6px 6px 0 0; border-bottom: 1px solid #141b24; }
.node-head.red { background: #6b2940; padding-left: 15px; }
.ncaret { width: 14px; height: 14px; flex: none; color: #d4d4d4; }
.node-title { margin-left: 8px; line-height: 1; }
.node-output .node-head { padding-left: 14px; }
.node-output .node-title { margin-left: 6px; }
.node-info .node-title { margin-left: 7px; }
.node-body { padding-top: 4px; }
.nrow { position: relative; height: 30px; line-height: 30px; }
.nrow.right { text-align: right; padding-right: 17px; }
.nrow.left { padding-left: 14px; }
.node-info .node-body { padding-top: 5px; }
.sock { position: absolute; display: block; width: 12px; height: 12px; border-radius: 50%; box-sizing: content-box; border: 1.500px solid #0c1118; }
.sock.out { right: -7.500px; top: 7.500px; }
.sock.in { left: -7.500px; top: 7.500px; }
.sock.geo { background: #00d6a3; }
.sock.virt { background: #3f3f3f; border: 1.500px solid #8a8a8a; width: 13px; height: 13px; }
.sock.white { background: #f2f2f2; }
.sock.pink { background: #c8a0d4; }

.toggle { display: flex; height: 27px; margin: 10px 16px 0 14.500px; border-radius: 6px; overflow: hidden; background: #0a0f15; box-shadow: 0 0 0 1px #131a23; }
.tog { flex: 1; text-align: center; line-height: 27px; }
.tog.on { flex: none; width: 85px; background: #1d3c58; }
.field { position: relative; display: flex; align-items: center; height: 28px; margin: 3px 15.500px 0 14px; padding-left: 7px; background: #0a0f15; border-radius: 7px; }
.field .sock.in { left: -21.500px; top: 7.500px; }
.box-ic { width: 20px; height: 18px; flex: none; }
.field-txt { margin-left: 10px; }
.field .x { margin-left: auto; margin-right: 11px; }
.x { width: 12px; height: 12px; flex: none; color: #c0c0c0; }
.crow { position: relative; display: flex; align-items: center; height: 31px; padding-left: 14.500px; gap: 5px; }
.crow .sock.in { left: -7.500px; top: 9px; }
.check { width: 20px; height: 21px; background: #0c0d0f; border-radius: 4px; box-shadow: 0 0 0 1px #182230; flex: none; }

.scroll-v { position: absolute; right: 1px; top: 43px; bottom: 19px; width: 5px; background: #1f2b36; border-radius: 3px; }
.scroll-h { position: absolute; left: 0; right: 10px; bottom: 3px; height: 4px; background: #1f2b36; border-radius: 2px; }
```

FILE: scene.js
```js
(function () {
  var NS = 'http://www.w3.org/2000/svg';
  var root = document.getElementById('scene3d');

  function add(parent, tag, attrs) {
    var n = document.createElementNS(NS, tag);
    for (var k in attrs) n.setAttribute(k, attrs[k]);
    parent.appendChild(n);
    return n;
  }
  function pts(list) { return list.map(function (p) { return p[0].toFixed(1) + ',' + p[1].toFixed(1); }).join(' '); }
  function grey(v) {
    v = Math.max(28, Math.min(190, Math.round(v)));
    return 'rgb(' + v + ',' + (v + 1) + ',' + (v + 2) + ')';
  }
  function poly(g, list, v, stroke, sw) {
    return add(g, 'polygon', { points: pts(list), fill: typeof v === 'string' ? v : grey(v), stroke: stroke || 'none', 'stroke-width': sw || 0, 'stroke-linejoin': 'round' });
  }
  function line(g, a, b, color, sw) {
    add(g, 'line', { x1: a[0], y1: a[1], x2: b[0], y2: b[1], stroke: color, 'stroke-width': sw });
  }
  function mid(a, b) { return [(a[0] + b[0]) / 2, (a[1] + b[1]) / 2]; }

  /* icosphere + suzanne are authored in coordinates 3x the page pixels */
  var big = add(root, 'g', { transform: 'translate(320 100) scale(.3333)' });

  function sphere() {
    var v = { a: [912, 72], b: [1060, 95], c: [795, 145], d: [1165, 150], e: [885, 215], f: [1055, 183], g: [1185, 210], h: [720, 240], i: [750, 295], j: [860, 365], k: [1010, 340], l: [1145, 310], m: [1222, 290], n: [1218, 378], o: [712, 365], q: [945, 492], r: [1115, 465], s: [1160, 510], t: [1030, 585], u: [905, 575], v: [810, 510] };
    var tris = 'ace aef afb bfd dfg chi cie eij ejk ekf fkl flg glm lmn ioj ovj jvq jqk kqr krl lrn rsn qtr rts qut qvu'.split(' ');
    var cx = 965, cy = 325, R = 255, seed = 0;
    function shade(p) {
      seed = (seed * 7 + 3) % 11;
      var t = ((p[0] - cx) * 0.8 + (p[1] - cy) * 0.65) / R;
      return 105 - 42 * t * (t > 0 ? 1.3 : 1) + (seed - 5) * .9;
    }
    var g = add(big, 'g', {});
    poly(g, 'a b d g m n s t u v o h c'.split(' ').map(function (k) { return v[k]; }), 90, '#222', 2);
    tris.forEach(function (t) {
      var A = v[t[0]], B = v[t[1]], C = v[t[2]];
      var ab = mid(A, B), bc = mid(B, C), ca = mid(C, A);
      [[A, ab, ca], [ab, B, bc], [ca, bc, C], [ab, bc, ca]].forEach(function (s) {
        var c = [(s[0][0] + s[1][0] + s[2][0]) / 3, (s[0][1] + s[1][1] + s[2][1]) / 3];
        var val = shade(c);
        poly(g, s, val, grey(val), 1);
      });
      line(g, ab, bc, '#8c8e8f', 1);
      line(g, bc, ca, '#8c8e8f', 1);
      line(g, ca, ab, '#8c8e8f', 1);
    });
    tris.forEach(function (t) {
      add(g, 'polygon', { points: pts([v[t[0]], v[t[1]], v[t[2]]]), fill: 'none', stroke: '#1a1c1e', 'stroke-width': 1.9, 'stroke-linejoin': 'round' });
    });
  }

  function suzanne() {
    var g = add(big, 'g', {});
    var W = '#141618', LW = 1.9;
    function lines(list) { list.forEach(function (s) { line(g, s[0], s[1], W, LW); }); }

    /* far ear */
    poly(g, [[705, 460], [775, 390], [820, 425], [800, 520], [770, 575], [735, 520]], 92, W, LW);
    poly(g, [[738, 465], [780, 420], [803, 442], [788, 505], [757, 545], [742, 510]], 60, W, LW);
    poly(g, [[750, 470], [778, 440], [790, 455], [778, 500], [758, 520]], 44, W, LW);
    lines([[[775, 390], [780, 420]], [[820, 425], [803, 442]], [[800, 520], [788, 505]], [[760, 450], [768, 480]], [[790, 455], [760, 490]], [[705, 460], [738, 465]], [[735, 520], [742, 510]]]);

    /* near ear */
    poly(g, [[55, 735], [70, 680], [150, 670], [230, 680], [262, 740], [325, 820], [205, 815], [135, 790]], 82, W, LW);
    poly(g, [[105, 705], [150, 702], [235, 720], [262, 745], [255, 775], [200, 785], [135, 775]], 66, W, LW);
    poly(g, [[135, 725], [180, 722], [235, 745], [230, 765], [190, 772], [145, 760]], 52, W, LW);
    poly(g, [[135, 790], [200, 790], [285, 790], [325, 820], [205, 815]], 150, W, LW);
    poly(g, [[55, 735], [70, 680], [105, 705], [135, 775], [135, 790]], 105, W, LW);
    poly(g, [[180, 722], [205, 733], [195, 770], [170, 765]], 88, W, LW);
    lines([[[150, 670], [150, 702]], [[230, 680], [235, 720]], [[180, 722], [200, 785]], [[150, 702], [135, 725]], [[235, 720], [235, 745]], [[105, 705], [135, 725]], [[200, 725], [165, 770]], [[195, 680], [195, 710]], [[85, 740], [120, 700]], [[135, 760], [100, 765]], [[235, 765], [255, 775]], [[145, 760], [135, 775]], [[212, 740], [222, 770]]]);

    /* neck / chin */
    var chinT = [[555, 890], [605, 908], [650, 910], [705, 840], [745, 920], [752, 948]];
    var chinM = [[557, 955], [605, 958], [655, 950], [700, 945], [730, 945], [750, 950]];
    var chinB = [[560, 1035], [610, 1040], [650, 1028], [700, 1000], [730, 975], [752, 950]];
    [[chinT, chinM, 84], [chinM, chinB, 70]].forEach(function (band) {
      for (var i = 0; i < 5; i++) {
        poly(g, [band[0][i], band[0][i + 1], band[1][i + 1], band[1][i]], band[2] - i * 8 + (i % 2 ? 8 : 0), W, LW);
      }
    });
    poly(g, [[655, 1018], [700, 990], [706, 1002], [660, 1028]], 110, W, LW);
    lines([[[580, 900], [582, 1038]], [[630, 910], [632, 1035]], [[678, 900], [678, 1010]], [[557, 920], [720, 905]]]);

    /* head dome */
    var G = [
      [[230, 630], [255, 575], [300, 510], [410, 420], [555, 403], [650, 432]],
      [[255, 685], [285, 615], [335, 560], [465, 470], [610, 435], [700, 462]],
      [[275, 735], [320, 670], [385, 605], [525, 545], [665, 495], [750, 520]],
      [[330, 790], [365, 735], [430, 705], [590, 645], [700, 605], [770, 575]],
      [[342, 825], [400, 790], [480, 700], [580, 690], [680, 610], [832, 605]]
    ];
    poly(g, [[342, 825], [345, 855], [440, 895], [520, 880], [555, 890], [650, 910], [705, 840], [770, 740], [810, 650], [832, 605], [700, 560]], 66, W, LW);
    for (var r = 0; r < 4; r++) {
      for (var c = 0; c < 5; c++) {
        var a = G[r][c], b = G[r][c + 1], cc = G[r + 1][c + 1], d = G[r + 1][c];
        var lum = 130 - r * 9 - c * 6 + ((r + c) % 2 ? -5 : 5);
        if (c === 4) lum -= 16;
        if (r === 3 && c > 1) lum -= 14;
        var ab = mid(a, b), bc = mid(b, cc), cd = mid(cc, d), da = mid(d, a);
        poly(g, [a, b, cc, d], lum, '#8e9091', 1);
        line(g, ab, cd, '#96989a', 1);
        line(g, da, bc, '#96989a', 1);
      }
    }
    lines([
      [G[0][2], G[1][2]], [G[1][2], G[2][2]], [G[2][2], G[3][2]], [G[0][3], G[1][3]], [G[1][3], G[2][3]], [G[2][3], G[3][3]], [G[0][4], G[1][4]], [G[1][4], G[2][4]], [G[1][1], G[1][2]], [G[1][2], G[1][3]], [G[2][1], G[2][2]], [G[2][2], G[2][3]], [G[2][3], G[2][4]], [G[2][4], G[2][5]], [G[3][2], G[3][3]], [G[0][2], G[0][3]], [G[0][3], G[0][4]], [G[3][0], G[3][1]], [G[1][3], G[1][4]], [G[0][4], G[0][5]]
    ]);
    poly(g, [[665, 495], [700, 460], [750, 520], [760, 580], [700, 605]], 68, W, LW);
    poly(g, [[610, 438], [650, 432], [700, 462], [665, 495]], 80, W, LW);
    lines([[[700, 560], [740, 550]], [[680, 500], [720, 600]]]);

    /* brow and face */
    poly(g, [[342, 825], [370, 745], [480, 700], [540, 690], [580, 715], [610, 680], [660, 625], [740, 600], [832, 605], [810, 650], [770, 690], [735, 640], [690, 650], [610, 770], [560, 770], [490, 745], [430, 790]], 112, W, LW);
    poly(g, [[445, 762], [490, 740], [515, 758], [470, 790]], 152);
    poly(g, [[615, 718], [650, 672], [686, 686], [640, 746]], 146);
    poly(g, [[370, 745], [430, 790], [480, 700]], 126, W, LW);
    poly(g, [[580, 715], [610, 770], [640, 700], [610, 680]], 72, W, LW);
    poly(g, [[740, 600], [760, 650], [810, 650], [832, 605]], 106, W, LW);
    poly(g, [[345, 830], [430, 800], [450, 880], [440, 895], [345, 855]], 60, W, LW);
    poly(g, [[560, 770], [610, 770], [650, 780], [690, 830], [640, 905], [600, 890], [590, 830]], 56, W, LW);
    poly(g, [[620, 890], [665, 865], [695, 862], [670, 905], [640, 912]], 118, W, LW);
    poly(g, [[400, 800], [445, 775], [470, 795], [430, 825]], 132, W, LW);
    lines([[[640, 870], [650, 910]], [[662, 868], [668, 905]], [[590, 830], [650, 780]], [[600, 890], [665, 865]], [[610, 770], [650, 850]], [[560, 720], [590, 830]], [[480, 700], [500, 745]], [[540, 690], [560, 770]], [[660, 625], [690, 650]], [[735, 640], [740, 600]], [[770, 690], [800, 690]], [[385, 850], [400, 800]], [[345, 855], [400, 860]], [[600, 780], [620, 820]], [[660, 800], [620, 850]], [[575, 775], [555, 800]]]);

    function eye(cx, cy, rx, ry, rot, base) {
      var e = add(g, 'g', { transform: 'translate(' + cx + ' ' + cy + ') rotate(' + rot + ')' });
      [[1, base], [.72, base - 14], [.45, base - 8]].forEach(function (lv) {
        add(e, 'ellipse', { rx: rx * lv[0], ry: ry * lv[0], fill: grey(lv[1]), stroke: W, 'stroke-width': LW });
      });
      for (var k = 0; k < 10; k++) {
        var t = k / 10 * Math.PI * 2;
        line(e, [Math.cos(t) * rx * .45, Math.sin(t) * ry * .45], [Math.cos(t) * rx, Math.sin(t) * ry], W, LW);
      }
    }
    eye(512, 833, 72, 44, -8, 72);
    eye(722, 735, 58, 46, -42, 68);
  }

  function cube() {
    var g = add(root, 'g', {});
    var T = [888, 99.3], L = [743.500, 159], Ri = [1011.600, 176], F = [862.500, 247.300], B = [861.200, 397.300], LB = [753.700, 303.300], RB = [997, 320], H = [885.200, 238.300];
    var defs = add(g, 'defs', {});
    var lg = add(defs, 'linearGradient', { id: 'cubeLeft', x1: 0, y1: 0, x2: 1, y2: 0 });
    add(lg, 'stop', { offset: 0, 'stop-color': '#5f6162' });
    add(lg, 'stop', { offset: 1, 'stop-color': '#696b6c' });
    poly(g, [L, T, Ri, F], '#757679');
    poly(g, [L, F, B, LB], 'url(#cubeLeft)');
    poly(g, [F, Ri, RB, B], '#3e3c3d');
    poly(g, [F, H, Ri], '#464445');
    line(g, T, H, '#8b8c8e', .8);
    line(g, LB, F, '#7d7f80', .7);
    line(g, H, RB, '#2b2a2b', .7);
    line(g, F, H, '#2a2a2b', .8);
    [[L, T], [T, Ri], [L, F], [F, Ri], [F, B], [L, LB], [LB, B], [B, RB], [RB, Ri]].forEach(function (s) { line(g, s[0], s[1], '#26282a', .8); });
  }

  function cone() {
    var g = add(root, 'g', {});
    var ax = [700, 307.300], cx = 716, cy = 459, rx = 99.500, ry = 75, tilt = -3.400 * Math.PI / 180, N = 32;
    var P = [];
    for (var i = 0; i < N; i++) {
      var t = (i + .4) / N * Math.PI * 2, x = Math.cos(t) * rx, y = Math.sin(t) * ry;
      P.push([cx + x * Math.cos(tilt) - y * Math.sin(tilt), cy + x * Math.sin(tilt) + y * Math.cos(tilt)]);
    }
    var faces = [];
    for (var j = 0; j < N; j++) {
      var a = P[j], b = P[(j + 1) % N], m = mid(a, b);
      faces.push({ a: a, b: b, m: m });
    }
    faces.sort(function (p, q) { return p.m[1] - q.m[1]; });
    faces.forEach(function (f) {
      var u = (f.m[0] - 617) / 198;
      var v = u < .55 ? 112 - (u < .12 ? (.12 - u) * 160 : 0) : 112 - (u - .55) * 125;
      poly(g, [ax, f.a, f.b], v, grey(v), .6);
    });
    faces.forEach(function (f) {
      if (f.m[1] > 425 || Math.abs(f.m[0] - 716) > 85) {
        line(g, ax, f.a, '#181a1c', .8);
      }
    });
    faces.forEach(function (f) {
      if (f.m[1] < 445 && Math.abs(f.m[0] - 716) < 90) {
        line(g, f.a, f.b, 'rgba(150,152,154,.25)', .8);
      }
    });
    poly(g, [[700, 307.300], [695, 321], [705, 321]], '#0d0e10');
  }

  function torus() {
    var g = add(root, 'g', {});
    var cx = 1110, cy = 403, R = 106.500, r = 26.500, s = .69, c = Math.sqrt(1 - s * s), phi = 6 * Math.PI / 180;
    var NU = 48, NV = 12, faces = [], backs = [];
    function rot(x, y, z) {
      var y2 = y * s - z * c, z2 = y * c + z * s;
      return [x * Math.cos(phi) - y2 * Math.sin(phi), x * Math.sin(phi) + y2 * Math.cos(phi), z2];
    }
    function vertex(u, v) {
      var k = R + r * Math.cos(v);
      var p = rot(k * Math.cos(u), k * Math.sin(u), r * Math.sin(v));
      return [cx + p[0], cy + p[1], p[2]];
    }
    var theta = -55 * Math.PI / 180;
    for (var i = 0; i < NU; i++) {
      for (var j = 0; j < NV; j++) {
        var u0 = i / NU * Math.PI * 2, u1 = (i + 1) / NU * Math.PI * 2;
        var v0 = j / NV * Math.PI * 2, v1 = (j + 1) / NV * Math.PI * 2;
        var um = (u0 + u1) / 2, vm = (v0 + v1) / 2;
        var n = rot(Math.cos(vm) * Math.cos(um), Math.cos(vm) * Math.sin(um), Math.sin(vm));
        var q = [vertex(u0, v0), vertex(u1, v0), vertex(u1, v1), vertex(u0, v1)];
        var depth = (q[0][2] + q[1][2] + q[2][2] + q[3][2]) / 4;
        var mx = (q[0][0] + q[2][0]) / 2 - cx, my = (q[0][1] + q[2][1]) / 2 - cy;
        var item = { q: q, n: n, d: depth, ang: Math.atan2(my, mx) };
        (n[2] > -.05 ? faces : backs).push(item);
      }
    }
    faces.sort(function (a, b) { return a.d - b.d; });
    faces.forEach(function (f) {
      var nz = Math.max(0, f.n[2]);
      var spec = Math.pow(Math.max(0, f.n[2] * .85 - f.n[1] * .3 + f.n[0] * .1), 8);
      var bump = 14 * Math.cos(2 * (f.ang - theta)) * nz;
      var v = 66 + 50 * nz + 22 * spec + bump + (f.n[1] > .6 ? -14 : 0);
      poly(g, f.q, v, '#191b1d', .7);
    });
    backs.forEach(function (f) {
      add(g, 'polygon', { points: pts(f.q), fill: 'none', stroke: 'rgba(190,192,194,.2)', 'stroke-width': .6 });
    });
  }

  sphere();
  suzanne();
  cube();
  cone();
  torus();
  add(root, 'circle', { cx: 709, cy: 386, r: 2, fill: '#6fc8ff' });
})();
```
